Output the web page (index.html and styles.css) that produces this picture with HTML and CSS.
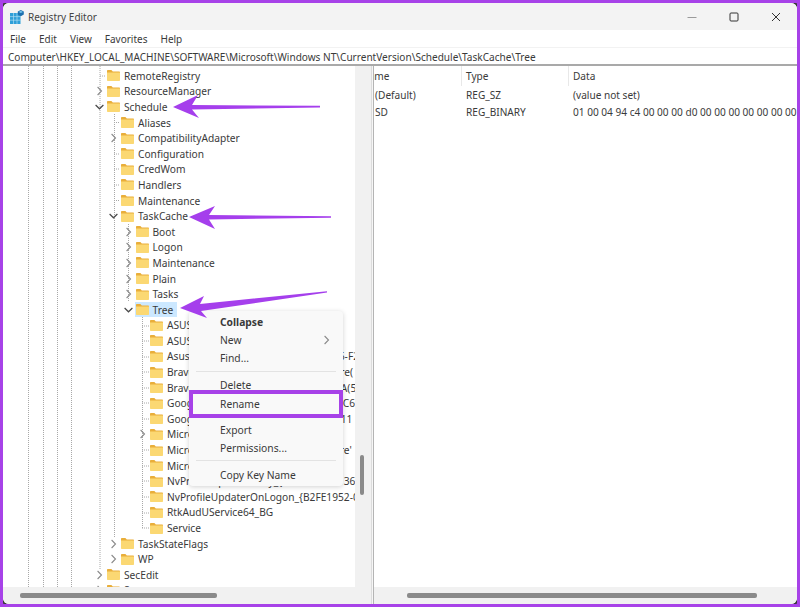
FILE: index.html
```html
<!DOCTYPE html>
<html lang="en">
<head>
<meta charset="utf-8">
<title>Registry Editor</title>
<link rel="stylesheet" href="styles.css">
</head>
<body>
<svg class="defs" width="0" height="0" aria-hidden="true">
  <symbol id="folder" viewBox="0 0 13 11">
    <path d="M0 1c0-.6.4-1 1-1h3.4l1.4 1.4H12c.6 0 1 .4 1 1V3H0z" fill="#e9ae3a"/>
    <path d="M0 2.6h13V10c0 .6-.4 1-1 1H1c-.6 0-1-.4-1-1z" fill="#fbd873"/>
  </symbol>
  <symbol id="right" viewBox="0 0 12 10"><path d="M2.6 1l3.9 4-3.9 4" fill="none" stroke="#8a8a8a" stroke-width="1.1"/></symbol>
  <symbol id="down" viewBox="0 0 12 10"><path d="M.6 3l3.9 3.8L8.4 3" fill="none" stroke="#4a4a4a" stroke-width="1.2"/></symbol>
</svg>
<div class="frame">
<div class="window">
  <header class="titlebar">
    <svg class="appicon" width="14" height="14" viewBox="0 0 14 14">
      <rect x="0" y="3" width="10.5" height="11" fill="#2f9fd8"/>
      <path d="M3.5 3v11M7 3v11M0 6.6h10.5M0 10.2h10.5" stroke="#bfe4f5" stroke-width=".6"/>
      <path d="M10.8 0l3 1.6v3l-3 1.6-3-1.6v-3z" fill="#1c6fae"/>
      <path d="M10.8 .8l2.2 1.1-2.2 1.2-2.2-1.2z" fill="#74c6ee"/>
    </svg>
    <span class="title">Registry Editor</span>
    <div class="winbtns">
      <svg width="10" height="10" viewBox="0 0 10 10"><path d="M.5 5.5h9" stroke="#9a9a9a" stroke-width="1"/></svg>
      <svg width="10" height="10" viewBox="0 0 10 10"><rect x="1" y="1" width="8" height="8" rx="1" fill="none" stroke="#333" stroke-width="1"/></svg>
      <svg width="10" height="10" viewBox="0 0 10 10"><path d="M1 1l8 8M9 1l-8 8" stroke="#333" stroke-width="1"/></svg>
    </div>
  </header>
  <nav class="menubar">
    <span>File</span><span>Edit</span><span>View</span><span>Favorites</span><span>Help</span>
  </nav>
  <div class="address">Computer\HKEY_LOCAL_MACHINE\SOFTWARE\Microsoft\Windows NT\CurrentVersion\Schedule\TaskCache\Tree</div>
  <main class="panes">
    <section class="leftpane">
      <div class="treewrap">
        <div class="tree">
          <svg class="guides" width="352" height="521" viewBox="3 66 352 521">
            <g stroke="#a8a8a8" stroke-width="1" stroke-dasharray="1 1" fill="none">
              <path d="M28.5 66v521M43.5 66v521M57.5 66v521M71.5 66v521"/>
              <path d="M100 66v504M114.5 114v424M128.5 224v78M142.5 317v211"/>
              <path d="M100 76h6M114 122.5h6M114 154h6M114 169h6M114 185h6M114 200.5h6M142 326h7M142 341h7M142 357h7M142 372h7M142 388h7M142 403h7M142 419h7M142 450h7M142 466h7M142 481h7M142 497h7M142 513h7M142 528h7"/>
            </g>
          </svg>
          <div class="row l0 leaf"><svg class="chev"></svg><svg class="fld"><use href="#folder"/></svg><span>RemoteRegistry</span></div>
          <div class="row l0"><svg class="chev"><use href="#right"/></svg><svg class="fld"><use href="#folder"/></svg><span>ResourceManager</span></div>
          <div class="row l0"><svg class="chev"><use href="#down"/></svg><svg class="fld"><use href="#folder"/></svg><span>Schedule</span></div>
          <div class="row l1"><svg class="chev"></svg><svg class="fld"><use href="#folder"/></svg><span>Aliases</span></div>
          <div class="row l1"><svg class="chev"><use href="#right"/></svg><svg class="fld"><use href="#folder"/></svg><span>CompatibilityAdapter</span></div>
          <div class="row l1"><svg class="chev"></svg><svg class="fld"><use href="#folder"/></svg><span>Configuration</span></div>
          <div class="row l1"><svg class="chev"></svg><svg class="fld"><use href="#folder"/></svg><span>CredWom</span></div>
          <div class="row l1"><svg class="chev"></svg><svg class="fld"><use href="#folder"/></svg><span>Handlers</span></div>
          <div class="row l1"><svg class="chev"></svg><svg class="fld"><use href="#folder"/></svg><span>Maintenance</span></div>
          <div class="row l1"><svg class="chev"><use href="#down"/></svg><svg class="fld"><use href="#folder"/></svg><span>TaskCache</span></div>
          <div class="row l2"><svg class="chev"><use href="#right"/></svg><svg class="fld"><use href="#folder"/></svg><span>Boot</span></div>
          <div class="row l2"><svg class="chev"><use href="#right"/></svg><svg class="fld"><use href="#folder"/></svg><span>Logon</span></div>
          <div class="row l2"><svg class="chev"><use href="#right"/></svg><svg class="fld"><use href="#folder"/></svg><span>Maintenance</span></div>
          <div class="row l2"><svg class="chev"><use href="#right"/></svg><svg class="fld"><use href="#folder"/></svg><span>Plain</span></div>
          <div class="row l2"><svg class="chev"><use href="#right"/></svg><svg class="fld"><use href="#folder"/></svg><span>Tasks</span></div>
          <div class="row l2 selected"><svg class="chev"><use href="#down"/></svg><div class="sel"><svg class="fld"><use href="#folder"/></svg><span>Tree</span></div></div>
          <div class="row l3"><svg class="chev"></svg><svg class="fld"><use href="#folder"/></svg><span>ASUS Update Checker 2.0</span></div>
          <div class="row l3"><svg class="chev"></svg><svg class="fld"><use href="#folder"/></svg><span>ASUS Update</span></div>
          <div class="row l3"><svg class="chev"></svg><svg class="fld"><use href="#folder"/></svg><span>AsusSystemAnalysis_{B2FE1952-0186-F2</span></div>
          <div class="row l3"><svg class="chev"></svg><svg class="fld"><use href="#folder"/></svg><span>BraveSoftwareUpdateTaskMachinCore(</span></div>
          <div class="row l3"><svg class="chev"></svg><svg class="fld"><use href="#folder"/></svg><span>BraveSoftwareUpdateTaskMachineUA(58</span></div>
          <div class="row l3"><svg class="chev"></svg><svg class="fld"><use href="#folder"/></svg><span>GoogleUpdateTaskMachineCore{12BC6</span></div>
          <div class="row l3"><svg class="chev"></svg><svg class="fld"><use href="#folder"/></svg><span>GoogleUpdateTaskMachineUA{3D4E11</span></div>
          <div class="row l3"><svg class="chev"><use href="#right"/></svg><svg class="fld"><use href="#folder"/></svg><span>Microsoft</span></div>
          <div class="row l3"><svg class="chev"></svg><svg class="fld"><use href="#folder"/></svg><span>MicrosoftEdgeUpdateTaskMachinCore'</span></div>
          <div class="row l3"><svg class="chev"></svg><svg class="fld"><use href="#folder"/></svg><span>MicrosoftEdgeUpdate</span></div>
          <div class="row l3"><svg class="chev"></svg><svg class="fld"><use href="#folder"/></svg><span>NvProfileUpdaterDaily_{B2FE1952-0136</span></div>
          <div class="row l3"><svg class="chev"></svg><svg class="fld"><use href="#folder"/></svg><span>NvProfileUpdaterOnLogon_{B2FE1952-0186</span></div>
          <div class="row l3"><svg class="chev"></svg><svg class="fld"><use href="#folder"/></svg><span>RtkAudUService64_BG</span></div>
          <div class="row l3"><svg class="chev"></svg><svg class="fld"><use href="#folder"/></svg><span>Service</span></div>
          <div class="row l1"><svg class="chev"><use href="#right"/></svg><svg class="fld"><use href="#folder"/></svg><span>TaskStateFlags</span></div>
          <div class="row l1"><svg class="chev"><use href="#right"/></svg><svg class="fld"><use href="#folder"/></svg><span>WP</span></div>
          <div class="row l0"><svg class="chev"><use href="#right"/></svg><svg class="fld"><use href="#folder"/></svg><span>SecEdit</span></div>
          <div class="row l0"><svg class="chev"><use href="#right"/></svg><svg class="fld"><use href="#folder"/></svg><span>Server</span></div>
        </div>
        <div class="vscroll"><div class="vthumb"></div></div>
      </div>
      <div class="hscroll hs-left"><div class="hthumb"></div></div>
    </section>
    <div class="splitter"></div>
    <section class="rightpane">
      <div class="values">
        <div class="vrow vhead"><div class="c1"><span class="clipname">Name</span></div><div class="c2">Type</div><div class="c3">Data</div></div>
        <div class="vrow"><div class="c1">(Default)</div><div class="c2">REG_SZ</div><div class="c3">(value not set)</div></div>
        <div class="vrow"><div class="c1">SD</div><div class="c2">REG_BINARY</div><div class="c3">01 00 04 94 c4 00 00 00 d0 00 00 00 00 00 00 00 00 00 00 00</div></div>
      </div>
      <div class="hscroll hs-right"><div class="hthumb"></div></div>
    </section>
  </main>
</div>
</div>

<div class="ctxmenu">
  <div class="mi bold">Collapse</div>
  <div class="mi">New<svg class="sub" width="12" height="10"><use href="#right"/></svg></div>
  <div class="mi">Find...</div>
  <div class="sep s1"></div>
  <div class="mi del">Delete</div>
  <div class="mi ren">Rename</div>
  <div class="mi exp">Export</div>
  <div class="mi">Permissions...</div>
  <div class="sep s2"></div>
  <div class="mi">Copy Key Name</div>
</div>
<div class="renamebox"></div>

<svg class="arrows" width="800" height="607" viewBox="0 0 800 607" aria-hidden="true">
  <g fill="#a53fec">
    <polygon points="173,107 198,95 192,105 320,105.8 320,107.4 192,109.5 199,118"/>
    <polygon points="189,217 215,206 209,215 331,216.2 331,217.8 209,219.5 215,229"/>
    <polygon points="180,308 204,296 200,304 327,291.2 327,292.6 201,311 207,318"/>
  </g>
</svg>
</body>
</html>
```
FILE: styles.css
```css
* { box-sizing: border-box; }
html, body { margin: 0; height: 607px; overflow: hidden; }
body {
  position: relative;
  width: 800px;
  background: #a742e8;
  padding: 3px;
  font-family: "Noto Sans", "Open Sans", sans-serif;
  font-size: 10.2px;
  color: #3a3a3a;
}
.defs { position: absolute; }
.frame { height: 601px; background: #3a3a3a; border-radius: 1px; }
.window {
  height: 601px;
  background: #fff;
  border-radius: 6px;
  display: flex;
  flex-direction: column;
  overflow: hidden;
}
.titlebar {
  height: 27px;
  flex: none;
  background: #f3f3f3;
  display: flex;
  align-items: center;
  padding-left: 7px;
}
.appicon { margin-right: 4px; }
.title { font-size: 10px; color: #444; }
.winbtns { margin-left: auto; display: flex; gap: 32px; padding-right: 16px; }
.menubar {
  height: 17px;
  flex: none;
  display: flex;
  align-items: center;
  gap: 13px;
  padding-left: 7px;
  background: #fff;
  font-size: 10px;
}
.address {
  height: 19px;
  flex: none;
  padding: 2px 0 0 5px;
  border-top: 1px solid #f2f2f2;
  border-bottom: 2px solid #a9a9a9;
  background: #fff;
  font-size: 10.07px;
  white-space: nowrap;
}
.panes { flex: 1; display: flex; min-height: 0; }
.leftpane { width: 368px; flex: none; display: flex; flex-direction: column; }
.treewrap { flex: 1; display: flex; min-height: 0; }
.tree {
  position: relative;
  width: 352px;
  flex: none;
  overflow: hidden;
  padding-top: 2px;
  white-space: nowrap;
}
.guides { position: absolute; left: 0; top: 0; }
.row { position: relative; height: 15.6px; display: flex; align-items: center; }
.l0 { padding-left: 92px; }
.l1 { padding-left: 106px; }
.l2 { padding-left: 120.5px; }
.l3 { padding-left: 135px; }
.chev { width: 12px; height: 10px; flex: none; }
.fld { width: 13px; height: 11px; flex: none; margin-right: 4px; }
.sel {
  display: flex;
  align-items: center;
  height: 15px;
  margin-left: -1px;
  padding: 0 4px 0 1px;
  background: #cce8ff;
}
.vscroll { width: 16px; flex: none; background: #f1f1f1; position: relative; }
.vthumb { position: absolute; left: 5px; top: 389px; width: 4px; height: 40px; background: #8a8a8a; border-radius: 2px; }
.hscroll { height: 17px; flex: none; background: #f1f1f1; display: flex; align-items: center; }
.hthumb { height: 5px; background: #8a8a8a; border-radius: 2px; }
.hs-left { padding-left: 17px; }
.hs-left .hthumb { width: 197px; }
.splitter { width: 3px; flex: none; background: #f6f6f6; border-left: 1px solid #dcdcdc; border-right: 1px solid #b4b4b4; }
.rightpane { flex: 1; display: flex; flex-direction: column; min-width: 0; font-size: 10.1px; }
.values { flex: 1; min-height: 0; overflow: hidden; white-space: nowrap; }
.vrow { display: flex; height: 17px; align-items: center; }
.vhead { height: 20px; }
.c1 { width: 87px; flex: none; overflow: hidden; padding-left: 1px; }
.c2 { width: 107px; flex: none; padding-left: 5px; }
.c3 { padding-left: 5px; }
.vhead .c2, .vhead .c3 { border-left: 1px solid #e8e8e8; padding-left: 4px; height: 20px; line-height: 20px; }
.clipname { margin-left: -14px; }
.hs-right { padding-left: 33px; }
.hs-right .hthumb { width: 350px; height: 5px; }
.ctxmenu {
  position: absolute;
  left: 189px;
  top: 311px;
  width: 154px;
  height: 175px;
  background: #f9f9f9;
  border-radius: 4px;
  box-shadow: 0 1px 5px rgba(0, 0, 0, .18);
  padding-top: 2px;
  font-size: 10.3px;
}
.mi { position: relative; height: 18px; line-height: 18px; padding-left: 31px; }
.bold { font-weight: 700; }
.sub { position: absolute; right: 9px; top: 4px; }
.sep { height: 1px; background: #e3e3e3; margin: 4px 7px 0; }
.del { margin-top: 4px; }
.ren { margin-top: 1px; }
.exp { margin-top: 8px; }
.s2 { margin-top: 3px; }
.s2 + .mi { margin-top: 5px; }
.renamebox {
  position: absolute;
  left: 189px;
  top: 390px;
  width: 154px;
  height: 28px;
  border: 4px solid #a742e8;
}
.arrows { position: absolute; left: 0; top: 0; pointer-events: none; }
```
